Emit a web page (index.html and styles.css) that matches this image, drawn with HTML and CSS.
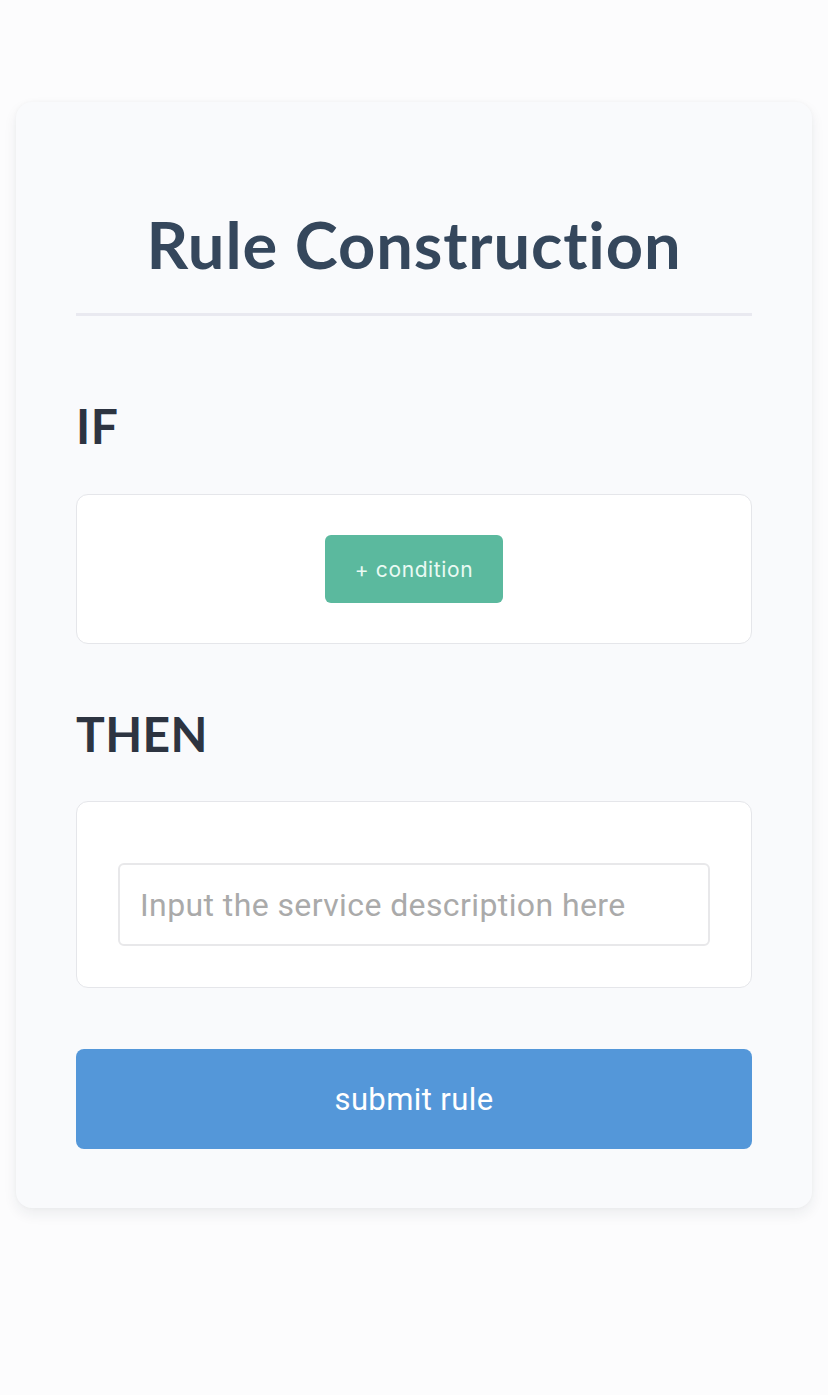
FILE: index.html
```html
<!DOCTYPE html>
<html lang="en">
<head>
<meta charset="utf-8">
<title>Rule Construction</title>
<link rel="stylesheet" href="styles.css">
</head>
<body>
<main class="card">
  <h1 class="title">Rule Construction</h1>
  <hr class="divider">
  <h2 class="section-label label-if">IF</h2>
  <div class="panel panel-if">
    <button class="btn-condition" type="button">+ condition</button>
  </div>
  <h2 class="section-label label-then">THEN</h2>
  <div class="panel panel-then">
    <input class="service-input" type="text" placeholder="Input the service description here">
  </div>
  <button class="btn-submit" type="button">submit rule</button>
</main>
</body>
</html>
```
FILE: styles.css
```css
html, body {
  margin: 0;
  padding: 0;
}
body {
  background: #fcfcfd;
  font-family: Lato, "Noto Sans", sans-serif;
  min-height: 1395px;
  padding-top: 102px;
  box-sizing: border-box;
}
.card {
  margin: 0 16px;
  width: 796px;
  box-sizing: border-box;
  background: #f9fafc;
  border-radius: 16px;
  box-shadow: 0 6px 14px rgba(30, 40, 60, 0.07), 0 0 4px rgba(30, 40, 60, 0.03);
  padding: 110px 60px 59px;
  display: flex;
  flex-direction: column;
}
.title {
  margin: 0;
  font-family: Lato, sans-serif;
  font-weight: 700;
  font-size: 65px;
  line-height: 64px;
  letter-spacing: 0.9px;
  font-variant-ligatures: none;
  text-align: center;
  color: #35475c;
}
.divider {
  margin: 37px 0 0;
  border: 0;
  height: 3px;
  background: #e9e9f0;
}
.section-label {
  margin: 0;
  font-family: Lato, sans-serif;
  font-weight: 700;
  font-size: 48px;
  line-height: 48px;
  letter-spacing: 0.4px;
  color: #2d3441;
}
.label-if {
  margin-top: 86px;
}
.label-then {
  margin-top: 66px;
}
.panel {
  background: #ffffff;
  border: 1px solid #e5e6ea;
  border-radius: 12px;
  box-sizing: border-box;
}
.panel-if {
  margin-top: 44px;
  height: 150px;
  display: flex;
  align-items: center;
  justify-content: center;
}
.btn-condition {
  width: 178px;
  height: 68px;
  border: 0;
  border-radius: 6px;
  background: #5bb99e;
  color: #eafaf3;
  font-family: Inter, Roboto, sans-serif;
  font-size: 21px;
  letter-spacing: 0.6px;
  padding: 0;
}
.panel-then {
  margin-top: 43px;
  padding: 61px 41px 41px;
}
.service-input {
  display: block;
  width: 100%;
  box-sizing: border-box;
  height: 83px;
  border: 2px solid #e8e8ea;
  border-radius: 6px;
  padding: 0 20px;
  font-family: Roboto, sans-serif;
  font-size: 32px;
  letter-spacing: 0.4px;
  color: #333;
  background: #fff;
  outline: none;
}
.service-input::placeholder {
  color: #aaaaaa;
}
.btn-submit {
  margin-top: 61px;
  height: 100px;
  width: 100%;
  border: 0;
  border-radius: 8px;
  background: #5497d9;
  color: #ffffff;
  font-family: Roboto, sans-serif;
  font-size: 31px;
  letter-spacing: 0.4px;
  padding: 0;
}
```
